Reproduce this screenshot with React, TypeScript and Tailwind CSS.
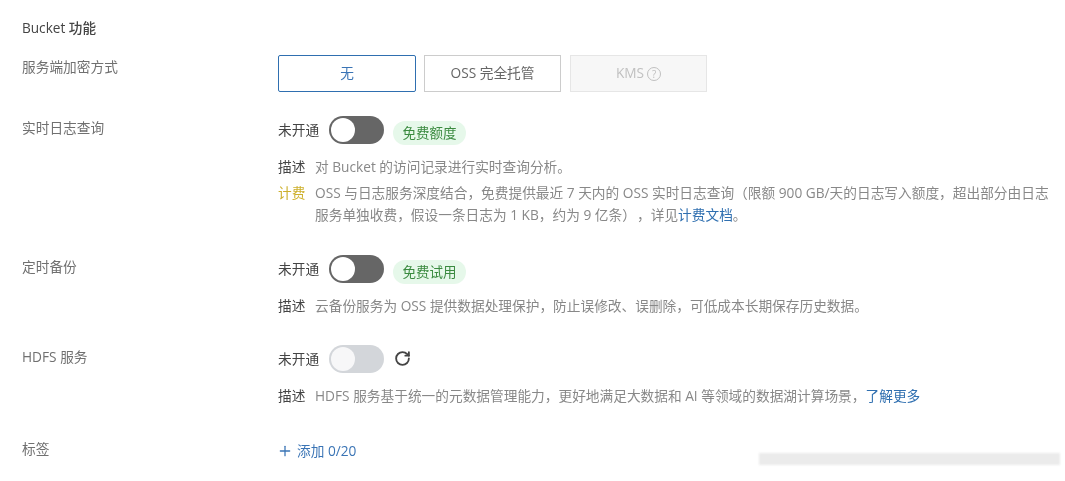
import { RotateCw, Plus } from "lucide-react"

const font = { cjk: "font-['Open_Sans','Noto_Sans_CJK_SC',sans-serif]" }

const Toggle = ({ disabled = false }: { disabled?: boolean }) => (
  <div className={`w-[55px] h-[28px] rounded-full flex items-center pl-[2px] ${disabled ? "bg-[#d3d6da]" : "bg-[#666666]"}`}>
    <div className={`w-[24px] h-[24px] rounded-full ${disabled ? "bg-[#f7f7f8]" : "bg-white"}`} />
  </div>
)

const Tag = ({ text }: { text: string }) => (
  <span className="ml-[9px] mt-[5px] w-[73px] h-[24px] rounded-full bg-[#e6f8ea] text-[#3a8a3f] text-[13.5px] leading-[24px] text-center">{text}</span>
)

const Row = ({ label, className, children }: { label: string; className: string; children: React.ReactNode }) => (
  <div className={`flex ${className}`}>
    <div className="w-[256px] shrink-0 pt-[2px] text-[#707070] text-[13.7px] leading-[20px]">{label}</div>
    <div className="flex-1">{children}</div>
  </div>
)

const Status = ({ disabled, children }: { disabled?: boolean; children?: React.ReactNode }) => (
  <div className="flex items-start h-[28px]">
    <span className="text-[#444444] text-[13.7px] leading-[28px] mr-[9px] w-[42px] whitespace-nowrap">未开通</span>
    <Toggle disabled={disabled} />
    {children}
  </div>
)

const Desc = ({ title, titleColor = "text-[#444444]", children }: { title: string; titleColor?: string; children: React.ReactNode }) => (
  <div className="flex text-[13.7px] leading-[22px]">
    <span className={`w-[37px] shrink-0 ${titleColor}`}>{title}</span>
    <p className="text-[#888888] w-[745px]">{children}</p>
  </div>
)

const App = () => {
  return (
    <div className={`relative w-[1065px] h-[481px] overflow-hidden bg-white pl-[22px] pt-[19px] blur-[0.4px] ${font.cjk}`}>
      <div className="text-[#444444] text-[13.6px] leading-[18px] font-medium">Bucket 功能</div>

      <div className="flex mt-[18px]">
        <div className="w-[256px] shrink-0 pt-[2px] text-[#707070] text-[13.7px] leading-[20px]">服务端加密方式</div>
        <div className="flex gap-[8px]">
          <div className="w-[138px] h-[37px] border border-[#2f6fb0] rounded-[2px] text-[#3a74b5] text-[13.7px] flex items-center justify-center">无</div>
          <div className="w-[137px] h-[37px] border border-[#cccccc] text-[#666666] text-[13.7px] flex items-center justify-center">OSS 完全托管</div>
          <div className="w-[137px] h-[37px] ml-[1px] border border-[#e6e6e6] bg-[#f7f7f7] text-[#c0c0c0] text-[13.7px] flex items-center justify-center gap-[3px]">
            KMS
            <span className="w-[14px] h-[14px] rounded-full border border-[#c0c0c0] text-[10px] leading-[12px] text-center">?</span>
          </div>
        </div>
      </div>

      <Row label="实时日志查询" className="mt-[24px]">
        <Status><Tag text="免费额度" /></Status>
        <div className="mt-[12px]">
          <Desc title="描述">对 Bucket 的访问记录进行实时查询分析。</Desc>
        </div>
        <div className="mt-[4px]">
          <Desc title="计费" titleColor="text-[#cdb02c]">
            OSS 与日志服务深度结合，免费提供最近 7 天内的 OSS 实时日志查询（限额 900 GB/天的日志写入额度，超出部分由日志<br />服务单独收费，假设一条日志为 1 KB，约为 9 亿条）<span className="ml-[8px]">，</span>详见<span className="text-[#2f6fb0]">计费文档</span>。
          </Desc>
        </div>
      </Row>

      <Row label="定时备份" className="mt-[29px]">
        <Status><Tag text="免费试用" /></Status>
        <div className="mt-[12px]">
          <Desc title="描述">云备份服务为 OSS 提供数据处理保护，防止误修改、误删除，可低成本长期保存历史数据。</Desc>
        </div>
      </Row>

      <Row label="HDFS 服务" className="mt-[28px]">
        <Status disabled>
          <RotateCw className="ml-[10px] mt-[5px] w-[17px] h-[17px] text-[#444444]" strokeWidth={2.6} />
        </Status>
        <div className="mt-[12px]">
          <Desc title="描述">HDFS 服务基于统一的元数据管理能力，更好地满足大数据和 AI 等领域的数据湖计算场景，<span className="text-[#2f6fb0]">了解更多</span></Desc>
        </div>
      </Row>

      <Row label="标签" className="mt-[30px]">
        <div className="flex items-center text-[#3a74b5] text-[13.7px] leading-[20px] mt-[4px]">
          <Plus className="-ml-[1px] w-[16px] h-[16px] mr-[4px]" strokeWidth={1.9} />
          添加 0/20
        </div>
      </Row>

      {/* blurred watermark strip */}
      <div className="absolute left-[759px] top-[453px] w-[301px] h-[12px] bg-[#ebebeb] blur-[1px]" />
    </div>
  )
}

export default App
